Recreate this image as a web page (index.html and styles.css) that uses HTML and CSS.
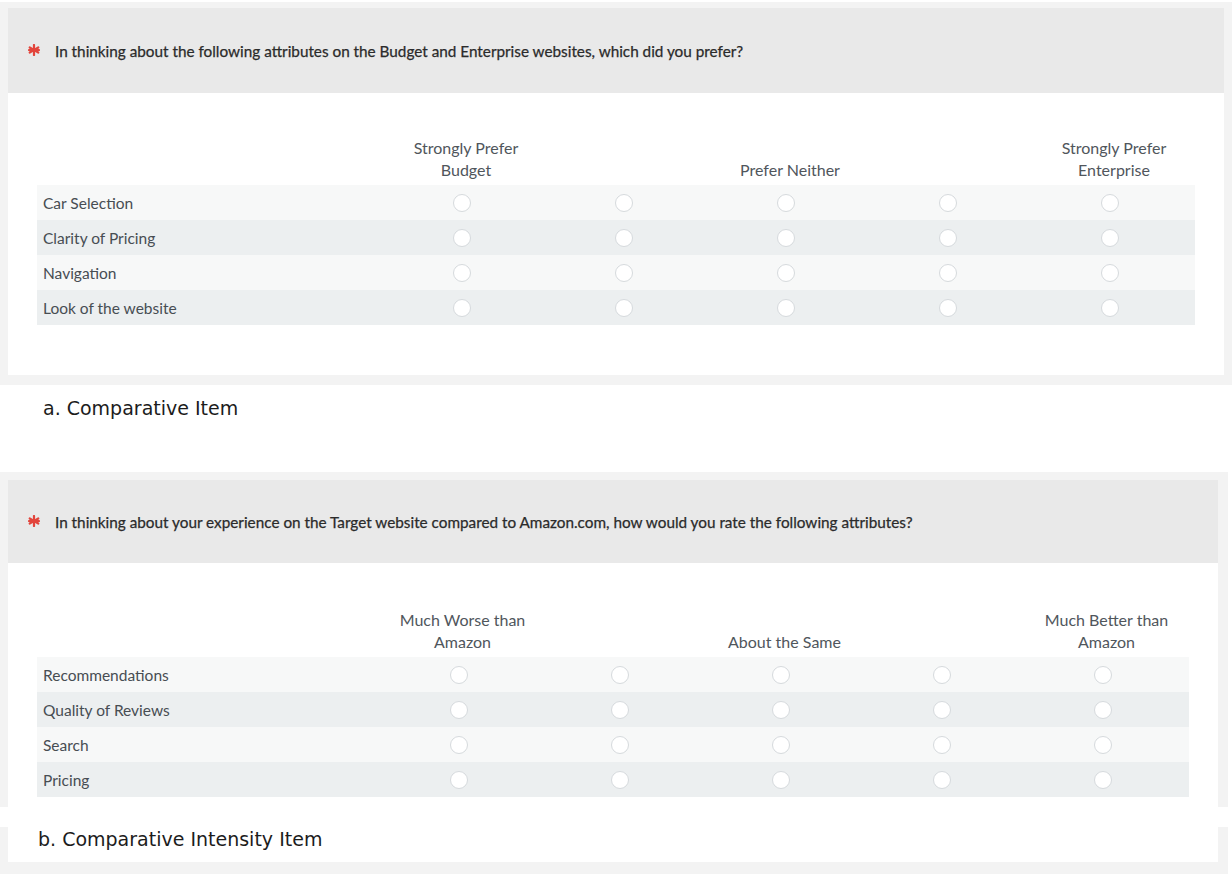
FILE: index.html
```html
<!DOCTYPE html>
<html lang="en">
<head>
<meta charset="utf-8">
<title>Comparative items</title>
<link rel="stylesheet" href="styles.css">
</head>
<body>
<div class="page">
  <section class="panel panel-a">
    <div class="q-head">
      <svg class="req" viewBox="0 0 12 12" width="12" height="12" aria-hidden="true">
        <g stroke="#e2453c" stroke-width="2.2" stroke-linecap="round">
          <line x1="6" y1="1" x2="6" y2="11"/>
          <line x1="1.7" y1="3.5" x2="10.3" y2="8.5"/>
          <line x1="1.7" y1="8.5" x2="10.3" y2="3.5"/>
          <line x1="1" y1="6" x2="11" y2="6"/>
        </g>
      </svg>
      <span class="q-text">In thinking about the following attributes on the Budget and Enterprise websites, which did you prefer?</span>
    </div>
    <div class="q-body body-a">
      <div class="matrix matrix-a">
        <div class="mrow mhead">
          <div></div>
          <div class="ch">Strongly Prefer<br>Budget</div>
          <div></div>
          <div class="ch">Prefer Neither</div>
          <div></div>
          <div class="ch">Strongly Prefer<br>Enterprise</div>
        </div>
        <div class="mrow odd"><div class="rl">Car Selection</div><span class="rb"></span><span class="rb"></span><span class="rb"></span><span class="rb"></span><span class="rb"></span></div>
        <div class="mrow even"><div class="rl">Clarity of Pricing</div><span class="rb"></span><span class="rb"></span><span class="rb"></span><span class="rb"></span><span class="rb"></span></div>
        <div class="mrow odd"><div class="rl">Navigation</div><span class="rb"></span><span class="rb"></span><span class="rb"></span><span class="rb"></span><span class="rb"></span></div>
        <div class="mrow even"><div class="rl">Look of the website</div><span class="rb"></span><span class="rb"></span><span class="rb"></span><span class="rb"></span><span class="rb"></span></div>
      </div>
    </div>
  </section>

  <p class="caption caption-a">a. Comparative Item</p>

  <section class="panel panel-b">
    <div class="q-head head-b">
      <svg class="req" viewBox="0 0 12 12" width="12" height="12" aria-hidden="true">
        <g stroke="#e2453c" stroke-width="2.2" stroke-linecap="round">
          <line x1="6" y1="1" x2="6" y2="11"/>
          <line x1="1.7" y1="3.5" x2="10.3" y2="8.5"/>
          <line x1="1.7" y1="8.5" x2="10.3" y2="3.5"/>
          <line x1="1" y1="6" x2="11" y2="6"/>
        </g>
      </svg>
      <span class="q-text">In thinking about your experience on the Target website compared to Amazon.com, how would you rate the following attributes?</span>
    </div>
    <div class="q-body body-b">
      <div class="matrix matrix-b">
        <div class="mrow mhead">
          <div></div>
          <div class="ch">Much Worse than<br>Amazon</div>
          <div></div>
          <div class="ch">About the Same</div>
          <div></div>
          <div class="ch">Much Better than<br>Amazon</div>
        </div>
        <div class="mrow odd"><div class="rl">Recommendations</div><span class="rb"></span><span class="rb"></span><span class="rb"></span><span class="rb"></span><span class="rb"></span></div>
        <div class="mrow even"><div class="rl">Quality of Reviews</div><span class="rb"></span><span class="rb"></span><span class="rb"></span><span class="rb"></span><span class="rb"></span></div>
        <div class="mrow odd"><div class="rl">Search</div><span class="rb"></span><span class="rb"></span><span class="rb"></span><span class="rb"></span><span class="rb"></span></div>
        <div class="mrow even"><div class="rl">Pricing</div><span class="rb"></span><span class="rb"></span><span class="rb"></span><span class="rb"></span><span class="rb"></span></div>
      </div>
    </div>
  </section>

  <div class="caption-box">
    <p class="caption caption-b">b. Comparative Intensity Item</p>
  </div>
</div>
</body>
</html>
```

FILE: styles.css
```css
html, body {
  margin: 0;
  padding: 0;
  background: #ffffff;
}

body {
  font-family: Lato, "Open Sans", Arial, sans-serif;
  color: #4a5056;
}

.page {
  width: 1232px;
}

.panel {
  background: #f3f3f3;
}

.panel-a {
  margin-top: 2px;
  padding: 6px 8px 10px 8px;
}

.panel-b {
  width: 1210px;
  padding: 8px 10px 0 8px;
}

.q-head {
  height: 85px;
  background: #e9e9e9;
  display: flex;
  align-items: center;
  padding-left: 20px;
  gap: 15px;
  box-sizing: border-box;
}

.head-b {
  height: 83px;
}

.req {
  flex: none;
  margin-top: -2px;
}

.q-text {
  font-size: 15.3px;
  color: #2b2b2b;
  font-weight: 400;
  -webkit-text-stroke: 0.25px #2b2b2b;
}

.q-body {
  background: #ffffff;
}

.body-a {
  padding: 44px 0 50px 29px;
}

.body-b {
  padding: 45px 0 10px 29px;
}

.matrix-a {
  width: 1158px;
  --cols: 344px repeat(5, 162px) 1fr;
}

.matrix-b {
  width: 1152px;
  --cols: 341px repeat(5, 161px) 1fr;
}

.mrow {
  display: grid;
  grid-template-columns: var(--cols);
  align-items: center;
  height: 35px;
}

.mhead {
  height: 48px;
  align-items: end;
  padding-bottom: 4px;
  box-sizing: border-box;
}

.matrix-b .mhead {
  height: 49px;
}

.ch {
  text-align: center;
  font-size: 16px;
  line-height: 22px;
  color: #50565c;
  white-space: nowrap;
  padding-left: 8px;
}

.odd {
  background: #f7f8f8;
}

.even {
  background: #eceff0;
}

.rl {
  padding-left: 6px;
  font-size: 15.5px;
  color: #474d53;
}

.rb {
  justify-self: center;
  width: 16px;
  height: 16px;
  border: 1px solid #d6dadd;
  border-radius: 50%;
  background: #ffffff;
}

.caption {
  margin: 0;
  font-family: "DejaVu Sans", Verdana, sans-serif;
  font-size: 19px;
  color: #1c1c1c;
}

.caption-a {
  height: 87px;
  box-sizing: border-box;
  padding: 11px 0 0 43px;
  line-height: 24px;
}

.caption-box {
  width: 1210px;
  margin-top: 20px;
  background: #f3f3f3;
  padding: 0 10px 12px 8px;
}

.caption-b {
  background: #ffffff;
  height: 35px;
  line-height: 24px;
  padding-left: 30px;
  box-sizing: border-box;
}
```
